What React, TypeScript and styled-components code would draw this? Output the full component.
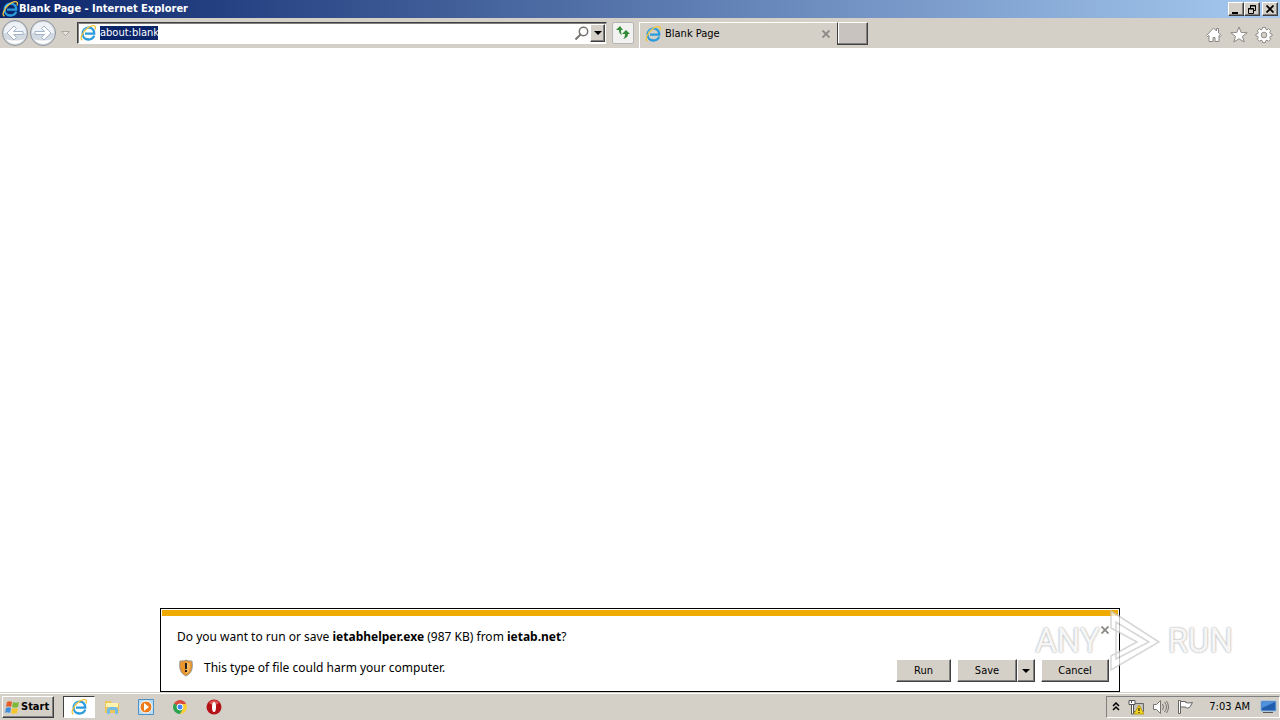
import React from "react";
import styled, { createGlobalStyle, css } from "styled-components";

const Global = createGlobalStyle`
  * { box-sizing: border-box; }
  body { margin: 0; background: #fff; color: #000; font: 11px/14px "DejaVu Sans Condensed", "DejaVu Sans", sans-serif; }
  button, input { font: inherit; color: inherit; margin: 0; padding: 0; }
  svg { display: block; flex: none; }
`;

const raised = css`
  border: 1px solid;
  border-color: #fff #404040 #404040 #fff;
  box-shadow: inset -1px -1px #808080;
  background: #d4d0c8;
`;

const Desktop = styled.div`
  display: flex;
  flex-direction: column;
  min-height: 100vh;
`;

const TitleBar = styled.header`
  display: flex;
  align-items: center;
  height: 18px;
  padding: 0 2px;
  gap: 1px;
  color: #fff;
  background: linear-gradient(90deg, #0a246a, #a6caf0);
`;

const Title = styled.h1`
  flex: 1;
  margin: 0;
  font-size: 11px;
  line-height: 14px;
  font-weight: bold;
`;

const WindowButtons = styled.div`
  display: flex;
`;

const CaptionButton = styled.button<{ $spaced?: boolean }>`
  ${raised}
  display: grid;
  place-items: center;
  width: 16px;
  height: 14px;
  margin-left: ${(p) => (p.$spaced ? 2 : 0)}px;
`;

const Toolbar = styled.nav`
  display: flex;
  align-items: center;
  height: 30px;
  padding: 0 7px 0 1px;
  background: #d4d0c8;
`;

const BareButton = styled.button`
  display: grid;
  place-items: center;
  border: 0;
  background: none;
`;

const AddressBox = styled.form`
  display: flex;
  align-items: center;
  flex: 0 1 530px;
  height: 22px;
  margin: 0 5px 0 4px;
  padding: 0 1px 0 2px;
  background: #fff;
  border: 1px solid;
  border-color: #404040 #d4d0c8 #fff #404040;
  box-shadow: inset 1px 1px #808080;
`;

const Field = styled.label`
  display: flex;
  flex: 1;
  padding-left: 4px;
`;

const AddressInput = styled.input`
  width: 58px;
  height: 14px;
  border: 0;
  outline: 0;
  color: #fff;
  background: #0a246a;
`;

const DropButton = styled.button<{ $w: number; $h: number }>`
  ${raised}
  display: grid;
  place-items: center;
  width: ${(p) => p.$w}px;
  height: ${(p) => p.$h}px;
`;

const RefreshButton = styled.button`
  display: grid;
  place-items: center;
  width: 22px;
  height: 22px;
  margin-right: 5px;
  border: 1px solid #b5b5b5;
  border-radius: 2px;
  background: #f1f1ef;
`;

const Tab = styled.div`
  display: flex;
  align-items: center;
  align-self: flex-end;
  flex: 0 1 198px;
  height: 26px;
  padding: 0 7px 4px 5px;
  gap: 4px;
  border: 1px solid #fff;
  border-width: 1px 0 0 1px;
  span { flex: 1; }
`;

const NewTab = styled.button`
  width: 31px;
  height: 23px;
  border: 1px solid #404040;
  border-top-color: #fff;
  box-shadow: inset -1px -1px #808080, inset 1px 0 #fff;
  background: #c9c3c0;
`;

const Tools = styled.div`
  display: flex;
  gap: 7px;
  margin-left: auto;
  padding-top: 3px;
`;

const Page = styled.main`
  display: flex;
  flex: 1;
  flex-direction: column;
  justify-content: flex-end;
  align-items: center;
  background: #fff;
`;

const Notification = styled.section`
  width: 75%;
  min-height: 84px;
  padding: 1px;
  border: 1px solid #000;
  background: #fff;
  font: 12px/16px "Noto Sans", sans-serif;
`;

const Stripe = styled.div`
  height: 6px;
  background: #f0ab00;
`;

const Row = styled.div<{ $top: number }>`
  display: flex;
  align-items: flex-start;
  padding: ${(p) => p.$top}px 9px 0 15px;
`;

const Message = styled.p`
  flex: 1;
  margin: 0;
  padding-top: 3px;
`;

const Warning = styled.p`
  display: flex;
  align-items: center;
  flex: 1;
  gap: 9px;
  margin: 0;
  padding-top: 1px;
`;

const Actions = styled.div`
  display: flex;
  padding-top: 1px;
  font: 11px/14px "DejaVu Sans Condensed", "DejaVu Sans", sans-serif;
`;

const ActionButton = styled.button<{ $w: number; $gap?: boolean }>`
  ${raised}
  width: ${(p) => p.$w}px;
  height: 23px;
  margin-right: ${(p) => (p.$gap ? 6 : 0)}px;
`;

const Spacer = styled.div`
  width: 6px;
`;

const Taskbar = styled.footer`
  display: flex;
  align-items: center;
  height: 28px;
  padding: 2px 0 2px 2px;
  background: #d4d0c8;
  border-top: 1px solid #d4d0c8;
  box-shadow: inset 0 1px #fff;
`;

const StartButton = styled.button`
  ${raised}
  display: flex;
  align-items: center;
  width: 52px;
  height: 22px;
  padding-left: 1px;
  margin-right: 9px;
  font-weight: bold;
`;

const TaskButton = styled.button<{ $active?: boolean }>`
  display: grid;
  place-items: center;
  width: ${(p) => (p.$active ? 32 : 34)}px;
  height: 22px;
  border: 1px solid;
  border-color: ${(p) => (p.$active ? "#404040 #fff #fff #404040" : "transparent")};
  background: ${(p) => (p.$active ? "#fff" : "none")};
`;

const Tray = styled.div`
  display: flex;
  align-items: center;
  height: 22px;
  margin-left: auto;
  padding: 0 2px 0 5px;
  gap: 8px;
  border: 1px solid;
  border-color: #808080 #fff #fff #808080;
`;

const Clock = styled.time`
  padding: 0 2px 0 7px;
  white-space: nowrap;
`;

const Watermark = styled.div`
  position: absolute;
  right: 47px;
  bottom: 44px;
  display: flex;
  align-items: center;
  gap: 7px;
  pointer-events: none;
  opacity: 0.75;
  color: #f4f4f4;
  font: 33px/70px "Roboto", sans-serif;
  text-shadow: 0 0 2px #999, 0 0 2px #aaa;
`;

const IE = () => (
  <svg width="16" height="16" viewBox="0 0 16 16" fill="none">
    <path d="M14.200 10.600C13.200 13.200 11 14.500 8.500 14.500 5 14.500 2.600 12 2.600 8.700 2.600 5.200 5.200 2.600 8.600 2.600c3.600 0 5.700 2.600 5.600 6.100H5" stroke="#2a9bdc" strokeWidth="2.300" />
    <path d="M3.200 7C4 4.300 6.200 2.800 8.600 2.800" stroke="#7cd4f6" />
    <path d="M2.400 15C-.7 14.200 2.300 7.400 6.800 3.700 10 1.100 13.900-.1 15 1.200c.6.800.4 2.200 0 3.200" stroke="#f2c43d" strokeWidth="1.300" />
  </svg>
);

const Arrow = ({ flip }: { flip?: boolean }) => (
  <svg width="28" height="28" viewBox="0 0 28 28">
    <circle cx="14" cy="14" r="12.500" fill="#d3d9e1" stroke="#8e949c" />
    <path d="M3 14a11 11 0 0 1 22 0Z" fill="#eef1f5" />
    <path d="M5 20a11 11 0 0 0 18 0c-5 2-13 2-18 0Z" fill="#fff" />
    <path transform={flip ? "rotate(180 14 14)" : undefined} d="m6 14 7-7 2.500 2.500-3 3H22v3h-9.500l3 3L13 21Z" fill="#fff" stroke="#a3b3c8" />
  </svg>
);

const Down = () => (
  <svg width="8" height="4" viewBox="0 0 8 4"><path d="M0 0h8L4 4Z" /></svg>
);

const Cross = ({ color = "#8b8885" }: { color?: string }) => (
  <svg width="8" height="8" viewBox="0 0 8 8" stroke={color} strokeWidth="1.800"><path d="m.5.5 7 7m0-7-7 7" /></svg>
);

export default function App() {
  return (
    <Desktop>
      <Global />
      <TitleBar>
        <IE />
        <Title>Blank Page - Internet Explorer</Title>
        <WindowButtons>
          <CaptionButton aria-label="Minimize"><svg width="10" height="9"><path d="M1 7h6v2H1z" /></svg></CaptionButton>
          <CaptionButton aria-label="Restore"><svg width="10" height="9" fill="none" stroke="#000"><path d="M3.500 3V.5h5v5H6M3 1h6M1.500 3.500h5v5h-5zM1 4h6" /></svg></CaptionButton>
          <CaptionButton $spaced aria-label="Close"><Cross color="#000" /></CaptionButton>
        </WindowButtons>
      </TitleBar>
      <Toolbar>
        <BareButton aria-label="Back"><Arrow /></BareButton>
        <BareButton aria-label="Forward"><Arrow flip /></BareButton>
        <BareButton aria-label="Recent pages">
          <svg width="16" height="12" fill="#e8e6e1" stroke="#aaa6a0"><path d="M4.500 4.500h8l-4 4Z" /></svg>
        </BareButton>
        <AddressBox>
          <IE />
          <Field><AddressInput aria-label="Address" defaultValue="about:blank" /></Field>
          <BareButton type="button" aria-label="Search">
            <svg width="16" height="15" fill="none" stroke="#77736f"><circle cx="9.500" cy="5.500" r="4.200" strokeWidth="1.500" /><path d="M6.500 8.500 1.500 13.500" strokeWidth="2" /></svg>
          </BareButton>
          <DropButton type="button" $w={15} $h={18} aria-label="Show address list"><Down /></DropButton>
        </AddressBox>
        <RefreshButton aria-label="Refresh">
          <svg width="16" height="14" fill="#318b35"><path d="M5 0 1 4h3c0 3 1 4 3 5-1-2-1-3-1-5h2ZM11 4 7 8h3c0 3-1 4-2 5 3-1 5-2 5-5h2Z" /></svg>
        </RefreshButton>
        <Tab>
          <IE />
          <span>Blank Page</span>
          <BareButton aria-label="Close tab"><Cross /></BareButton>
        </Tab>
        <NewTab aria-label="New tab" />
        <Tools>
          <BareButton aria-label="Home">
            <svg width="18" height="18" fill="#fff" stroke="#8c8884"><path d="m1.500 9.500 7-7.500 3 3V2.500h2V7l3 2.500-1 1-1.500-1v6h-4v-4h-2v4h-4v-6l-1.500 1Z" /></svg>
          </BareButton>
          <BareButton aria-label="Favorites">
            <svg width="18" height="18" fill="#fff" stroke="#8c8884"><path d="m9 1 2.200 5.500 6 .2-4.700 3.700L14.200 16 9 12.800 3.800 16l1.700-5.600L.8 6.700l6-.2Z" /></svg>
          </BareButton>
          <BareButton aria-label="Tools">
            <svg width="18" height="18" viewBox="0 0 18 19" fill="#fff" stroke="#8c8884"><path d="M7.500 1.500h3l.4 2 1.300.5 1.700-1.100 2.200 2.200L15 6.800l.5 1.300 2 .4v2l-2 .5-.5 1.200 1.100 1.700-2.200 2.200-1.700-1.100-1.300.5-.4 2h-3l-.4-2-1.300-.5-1.700 1.100-2.200-2.200L3 12.200 2.500 11l-2-.5v-2l2-.4L3 6.800 1.900 5.100l2.200-2.200L5.800 4l1.300-.5Z" /><circle cx="9" cy="9.500" r="3" fill="#d4d0c8" /></svg>
          </BareButton>
        </Tools>
      </Toolbar>
      <Page>
        <Notification>
          <Stripe />
          <Row $top={10}>
            <Message>Do you want to run or save <b>ietabhelper.exe</b> (987 KB) from <b>ietab.net</b>?</Message>
            <BareButton aria-label="Dismiss"><Cross /></BareButton>
          </Row>
          <Row $top={13}>
            <Warning>
              <svg width="18" height="18"><path d="M9 1c2 1 4 1 6 1 1 7 0 12-6 15C3 14 2 9 3 2c2 0 4 0 6-1Z" fill="#e9952c" stroke="#999" /><path d="M9 3c2 1 3 1 4 1 0 5 0 9-4 11Z" fill="#f7b95f" /><path d="M8 4h2v6H8zm0 7h2v2H8z" fill="#222" /></svg>
              This type of file could harm your computer.
            </Warning>
            <Actions>
              <ActionButton $w={55} $gap>Run</ActionButton>
              <ActionButton $w={60}>Save</ActionButton>
              <DropButton $w={18} $h={23} aria-label="Save options"><Down /></DropButton>
              <Spacer />
              <ActionButton $w={68}>Cancel</ActionButton>
            </Actions>
          </Row>
        </Notification>
      </Page>
      <Taskbar>
        <StartButton>
          <svg width="17" height="16"><path d="M3 3c2-1 4-1 5 0L7 8c-2-1-4-1-5 0Z" fill="#e45c26" /><path d="M9 3c2 1 4 1 6 0l-1 5c-2 1-4 1-6 0Z" fill="#7dba36" /><path d="M2 9c2-1 3-1 5 0l-1 5c-2-1-4-1-5 0Z" fill="#3e8ede" /><path d="M8 9c2 1 4 1 6 0l-1 5c-2 1-4 1-6 0Z" fill="#f7c52d" /></svg>
          Start
        </StartButton>
        <TaskButton $active aria-label="Internet Explorer"><IE /></TaskButton>
        <TaskButton aria-label="File Explorer">
          <svg width="17" height="16"><path d="M1 2h6l1 2h7v10H1Z" fill="#eac65b" /><path d="M2 4h12v4H2z" fill="#fff3ae" /><path d="M3 15v-5l2-2h7l2 2v5h-3v-4H6v4Z" fill="#76bde5" /></svg>
        </TaskButton>
        <TaskButton aria-label="Media Player">
          <svg width="16" height="16"><path d="M.5.5h15v15H.5z" fill="#b9dcf3" stroke="#4c91c7" /><circle cx="8" cy="8" r="6" fill="#ee7b19" stroke="#fff" /><path d="m6 4 5 4-5 4Z" fill="#fff" /></svg>
        </TaskButton>
        <TaskButton aria-label="Chrome">
          <svg width="14" height="14" viewBox="0 0 14 14"><path d="M7 7 1 3.500A7 7 0 0 1 13 3.500Z" fill="#db4b39" /><path d="M7 7 1 3.500A7 7 0 0 0 7 14l3-5Z" fill="#2ba24c" /><path d="M7 4h6.300A7 7 0 0 1 7 14l3-5Z" fill="#fccc35" /><circle cx="7" cy="7" r="3" fill="#4285f4" stroke="#fff" /></svg>
        </TaskButton>
        <TaskButton aria-label="Opera">
          <svg width="16" height="16"><circle cx="8" cy="8" r="7.500" fill="#b51218" /><path d="M3 4a6 6 0 0 1 10 0L8 7Z" fill="#dd5554" /><ellipse cx="8" cy="8" rx="2" ry="5" fill="#fff" /></svg>
        </TaskButton>
        <Tray>
          <BareButton aria-label="Show hidden icons"><svg width="8" height="9" fill="none" stroke="#000" strokeWidth="1.500"><path d="m1 4 3-3 3 3M1 8l3-3 3 3" /></svg></BareButton>
          <svg width="16" height="16"><path d="M4.500 4.500h11v8h-11z" fill="#c4c2bd" stroke="#666" /><path d="M1 1.500h6v4H1zM3.500 5v10h2V6" fill="#fff" stroke="#555" /><path d="M3.500 1v3" stroke="#555" /><path d="m11 6 5 9H6Z" fill="#f5d51d" stroke="#b99b15" /><path d="M10.500 9h1v3h-1zm0 4h1v1h-1z" /></svg>
          <svg width="17" height="16" fill="none" stroke="#77736f"><path d="M1.500 5.500h3l4-4v13l-4-4h-3Z" fill="#fff" /><path d="M10.500 5q2 3 0 6M12.500 3q4 5 0 10M14.500 2q4 6 0 12" /></svg>
          <svg width="17" height="16"><path d="M1.500 1.500h2v13h-2z" fill="#fff" stroke="#666" /><path d="M3.500 2.500h5v1q3 1 7 0l-3 5q-2 1-4 0V8h-5Z" fill="#fff" stroke="#666" /></svg>
          <Clock>7:03 AM</Clock>
          <svg width="17" height="15"><path d="M1 2h15v10H1z" fill="#225cac" stroke="#8bb8e6" /><path d="M2 3h13L2 9Z" fill="#4e91dc" /><path d="M3 13h10v1H3z" fill="#555" /></svg>
        </Tray>
      </Taskbar>
      <Watermark>
        <span>ANY</span>
        <svg width="54" height="64" fill="none" stroke="#c9c9c9" strokeWidth="1.500"><path d="M4 2v17L30 33 4 47v14L52 33Z" fill="#fff" /><path d="M9 13v37l33-17Z" /></svg>
        <span>RUN</span>
      </Watermark>
    </Desktop>
  );
}
